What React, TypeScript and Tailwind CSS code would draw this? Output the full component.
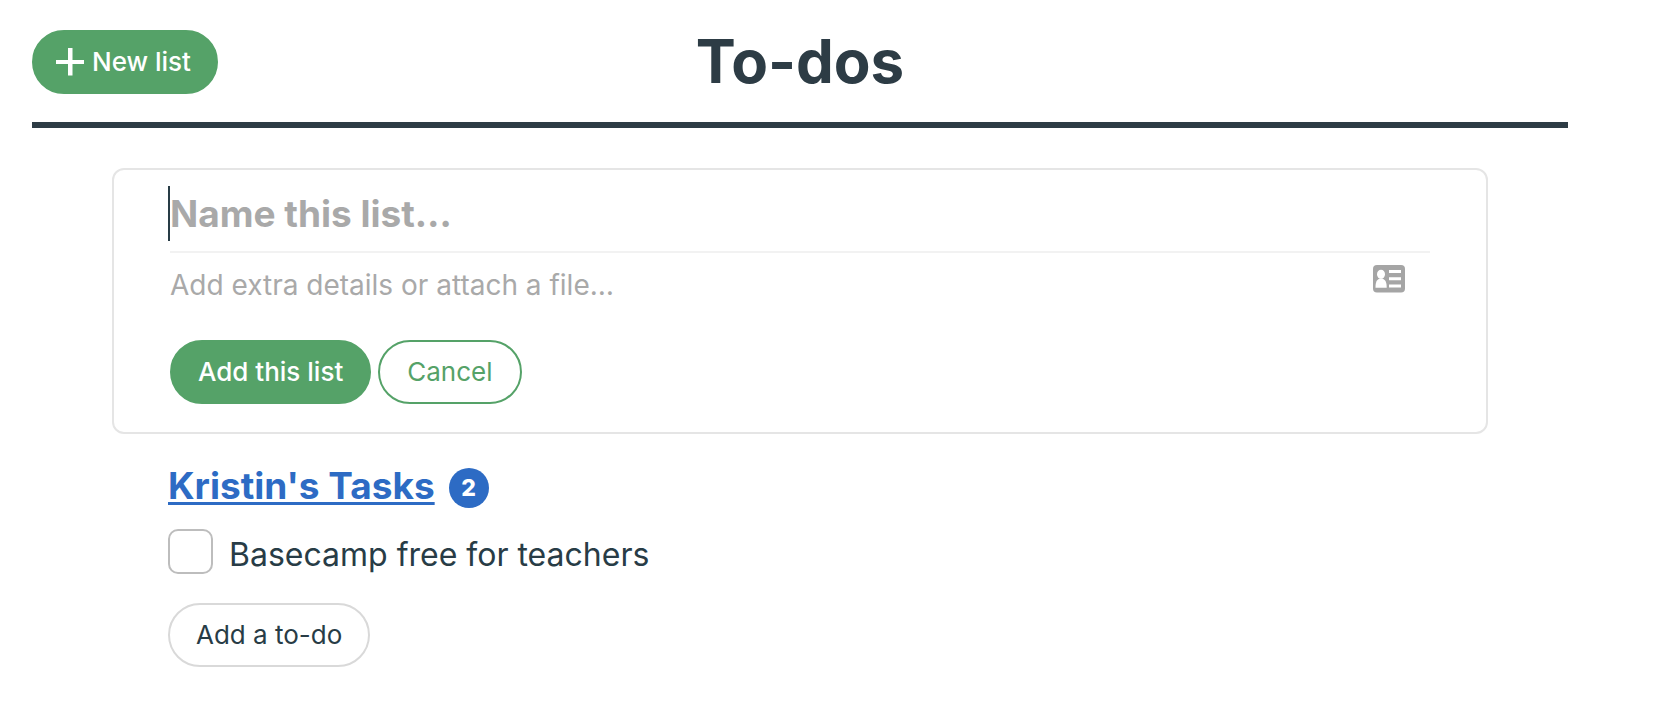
import { useState } from "react";
import type { ReactNode } from "react";

type PillTone = "solid" | "outline" | "neutral";

const pillTones: Record<PillTone, string> = {
  solid: "border-[#55a268] bg-[#55a268] font-medium text-white",
  outline: "border-[#55a268] bg-white text-[#55a268]",
  neutral: "border-[#d9d9d9] bg-white text-[#283c46]",
};

function Pill({ tone, className = "px-[26px]", children }: { tone: PillTone; className?: string; children: ReactNode }) {
  return (
    <button
      type="button"
      className={`flex h-16 items-center rounded-full border-2 pb-0.5 text-[26px] whitespace-nowrap ${pillTones[tone]} ${className}`}
    >
      {children}
    </button>
  );
}

function PlusIcon() {
  return (
    <svg className="mt-0.5 size-7" viewBox="0 0 28 28" fill="currentColor" aria-hidden="true">
      <path d="M12 0h4.500v12H28v4H16.500v11.500H12V16H0v-4h12z" />
    </svg>
  );
}

function ContactCardIcon() {
  return (
    <svg className="h-7 w-8" viewBox="0 0 32 28" aria-hidden="true">
      <rect width="32" height="27.500" rx="4" fill="#a5a5a5" />
      <g fill="#fff">
        <ellipse cx="8" cy="9.300" rx="4" ry="4.500" />
        <path d="M2.500 22.700c0-5 .8-8.400 4.500-9.300h2c3.700.9 4.700 4.300 4.700 9.300z" />
        <path d="M16 5h12v3H16zM16 12.300h12v3H16zM16 19.600h12v3H16z" />
      </g>
    </svg>
  );
}

function NewListForm() {
  return (
    <form className="rounded-xl border-2 border-[#e5e5e5] px-14 pt-4 pb-7" onSubmit={(e) => e.preventDefault()}>
      <div className="relative border-b-2 border-[#f2f2f2] pb-2.5">
        <span className="absolute top-0 -left-0.5 h-[55px] w-0.5 bg-[#283c46]" aria-hidden="true" />
        <input
          type="text"
          aria-label="List name"
          placeholder="Name this list…"
          className="block h-[55px] w-full bg-transparent text-[37px] font-bold outline-none placeholder:text-[#a9a9a9]"
        />
      </div>
      <div className="flex items-start justify-between pr-[25px]">
        <input
          type="text"
          aria-label="Extra details"
          placeholder="Add extra details or attach a file…"
          className="h-16 min-w-0 flex-1 bg-transparent text-[28px] outline-none placeholder:text-[#a9a9a9]"
        />
        <button type="button" aria-label="Mention a person" className="mt-3">
          <ContactCardIcon />
        </button>
      </div>
      <div className="mt-[23px] flex gap-[7px]">
        <Pill tone="solid">Add this list</Pill>
        <Pill tone="outline" className="px-[27px]">Cancel</Pill>
      </div>
    </form>
  );
}

export default function App() {
  const [done, setDone] = useState(false);
  return (
    <div className="min-h-screen bg-white pt-[30px] pr-[100px] pb-12 pl-8 font-['Inter',sans-serif] text-[#283c46]">
      <header className="grid grid-cols-[1fr_auto_1fr] items-center border-b-[6px] border-[#2d3c45] pb-7">
        <div className="flex">
          <Pill tone="solid" className="gap-2 pr-[25px] pl-[22px]">
            <PlusIcon />
            New list
          </Pill>
        </div>
        <h1 className="pb-0.5 text-[60px] leading-[62px] font-bold text-[#2d3c45]">To-dos</h1>
      </header>

      <main className="px-20 pt-10">
        <NewListForm />

        <section className="px-14 pt-[29px]">
          <div className="flex items-center gap-[14px]">
            <h2 className="pb-1 text-[37px] leading-[46px] font-bold">
              <a href="#tasks" className="text-[#2d6bc4] underline decoration-[3px] underline-offset-[3px]">
                Kristin's Tasks
              </a>
            </h2>
            <span className="grid size-10 place-items-center rounded-full bg-[#2d6bc4] text-[23px] font-extrabold text-white">
              2
            </span>
          </div>

          <div className="mt-4 flex items-center gap-4">
            <input
              id="todo-1"
              type="checkbox"
              checked={done}
              onChange={(e) => setDone(e.target.checked)}
              className="size-[45px] appearance-none rounded-[10px] border-2 border-[#bdbdbd] bg-white checked:bg-[#55a268]"
            />
            <label htmlFor="todo-1" className="pt-1.5 text-[32px] leading-[39px]">
              Basecamp free for teachers
            </label>
          </div>

          <div className="mt-[29px] flex">
            <Pill tone="neutral">Add a to-do</Pill>
          </div>
        </section>
      </main>
    </div>
  );
}
